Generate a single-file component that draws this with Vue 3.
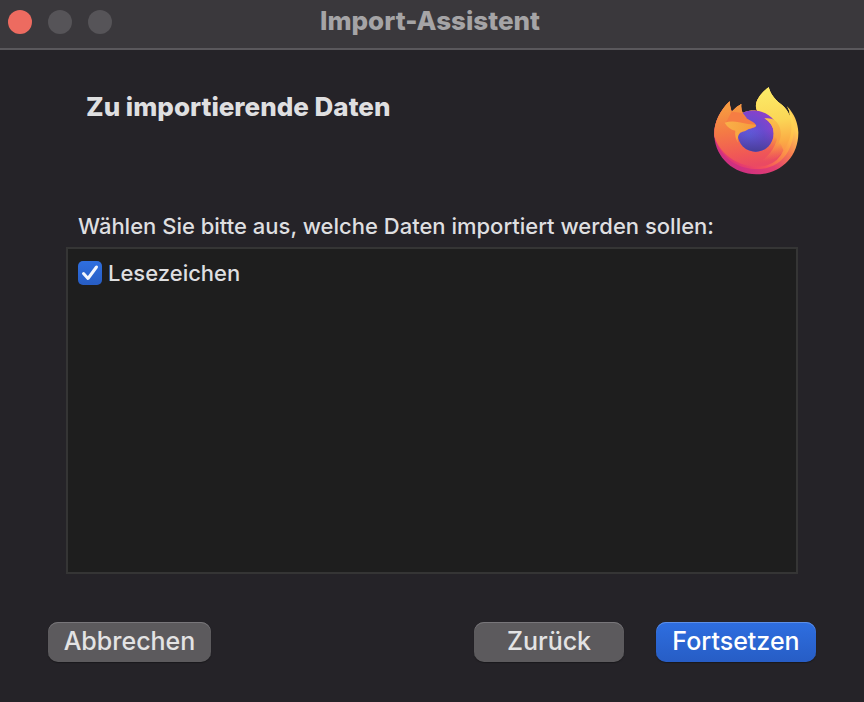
<template>
  <div class="wizard">
    <header class="titlebar">
      <div class="lights">
        <button class="light close" aria-label="Schließen" @click="closed = true"></button>
        <button class="light" aria-label="Minimieren" disabled></button>
        <button class="light" aria-label="Zoomen" disabled></button>
      </div>
      <h1 class="title">Import-Assistent</h1>
    </header>

    <div class="page-header">
      <h2 class="heading">Zu importierende Daten</h2>
      <svg class="logo" viewBox="30 32 255 264" aria-hidden="true">
        <defs>
          <linearGradient id="flame" x1="250" y1="70" x2="75" y2="280" gradientUnits="userSpaceOnUse">
            <stop offset="0" stop-color="#ffed60" />
            <stop offset="0.28" stop-color="#ffc04a" />
            <stop offset="0.5" stop-color="#fb8a48" />
            <stop offset="0.72" stop-color="#f4525a" />
            <stop offset="1" stop-color="#d92a80" />
          </linearGradient>
          <linearGradient id="rim" x1="275" y1="160" x2="120" y2="290" gradientUnits="userSpaceOnUse">
            <stop offset="0" stop-color="#ffce55" />
            <stop offset="0.3" stop-color="#f67a50" />
            <stop offset="0.6" stop-color="#e23f70" />
            <stop offset="1" stop-color="#cf3080" />
          </linearGradient>
          <linearGradient id="tail" x1="200" y1="34" x2="225" y2="250" gradientUnits="userSpaceOnUse">
            <stop offset="0" stop-color="#fcec68" />
            <stop offset="0.45" stop-color="#fbd656" />
            <stop offset="0.75" stop-color="#fbac45" />
            <stop offset="1" stop-color="#f97c48" stop-opacity="0" />
          </linearGradient>
          <linearGradient id="body" x1="95" y1="90" x2="120" y2="270" gradientUnits="userSpaceOnUse">
            <stop offset="0" stop-color="#f69a40" />
            <stop offset="0.4" stop-color="#f47a45" />
            <stop offset="0.8" stop-color="#f05856" />
            <stop offset="1" stop-color="#ea4a62" />
          </linearGradient>
          <radialGradient id="globe" cx="135" cy="180" r="88" gradientUnits="userSpaceOnUse">
            <stop offset="0" stop-color="#5f5fdf" />
            <stop offset="0.5" stop-color="#6a4bd0" />
            <stop offset="1" stop-color="#8f3fc9" />
          </radialGradient>
          <linearGradient id="globeShade" x1="150" y1="160" x2="150" y2="226" gradientUnits="userSpaceOnUse">
            <stop offset="0" stop-color="#5144b0" stop-opacity="0" />
            <stop offset="1" stop-color="#463f98" />
          </linearGradient>
          <linearGradient id="snout" x1="65" y1="135" x2="155" y2="160" gradientUnits="userSpaceOnUse">
            <stop offset="0" stop-color="#f9b048" />
            <stop offset="1" stop-color="#f69b3c" />
          </linearGradient>
          <linearGradient id="cheek" x1="205" y1="128" x2="195" y2="225" gradientUnits="userSpaceOnUse">
            <stop offset="0" stop-color="#fbc04c" />
            <stop offset="0.5" stop-color="#f9a544" />
            <stop offset="1" stop-color="#f67a48" stop-opacity="0" />
          </linearGradient>
        </defs>
        <path fill="url(#rim)" d="M31 180C28 145 45 105 77 75Q77 91 83 106Q96 91 112 83Q110 98 116 110C135 101 156 102 160 104C145 79 173 48 194 33C201 58 216 73 234 86Q250 99 257 119Q258 104 249 90C271 112 282 141 283 168C284 242 229 294 157 294C89 294 35 244 31 180Z" />
        <path fill="url(#flame)" d="M31 180C28 145 45 105 77 75Q77 91 83 106Q96 91 112 83Q110 98 116 110C135 101 156 102 160 104C145 79 173 48 194 33C201 58 216 73 234 86Q250 99 257 119Q258 104 249 90C276 126 276 180 253 224C232 263 193 281 152 278C92 276 45 236 31 180Z" />
        <path fill="url(#body)" d="M31 180C28 145 45 105 77 75Q77 91 83 106Q96 91 112 83Q110 98 116 110L156 148L208 180Q228 190 238 222Q225 255 190 267C130 284 52 248 31 180Z" />
        <path fill="url(#tail)" d="M160 104C145 79 173 48 194 33C201 58 216 73 234 86C271 119 273 184 231 233C215 250 196 256 175 252C195 238 222 205 222 166Q223 139 203 124Q184 110 160 104Z" />
        <circle cx="155" cy="172" r="54" fill="url(#globe)" />
        <path fill="url(#globe)" d="M116 110C143 96 188 102 210 132Q192 127 181 127L208 157Q190 172 154 157Z" />
        <circle cx="155" cy="172" r="54" fill="url(#globeShade)" />
        <path fill="url(#cheek)" d="M181 126Q201 124 210 130C232 146 236 176 223 202Q209 228 176 234Q164 232 158 226C187 224 209 201 209 171Q209 143 181 126Z" />
        <path fill="#f67d43" d="M83 106Q98 107 115 111C122 127 139 131 152 141Q158 147 154 152C134 162 105 159 96 145Q84 130 65 140Z" />
        <path fill="url(#snout)" d="M62 139Q83 132 105 138Q133 145 156 145Q158 150 149 153Q132 159 125 163C116 167 109 165 103 178Q98 190 103 200Q91 183 94 163Q73 158 62 139Z" />
      </svg>
    </div>

    <main class="content">
      <p id="prompt" class="prompt">Wählen Sie bitte aus, welche Daten importiert werden sollen:</p>
      <div class="data-list" role="group" aria-labelledby="prompt">
        <label v-for="item in items" :key="item.id" class="data-item">
          <span class="check">
            <input v-model="item.checked" type="checkbox" />
            <svg v-if="item.checked" viewBox="0 0 24 24" aria-hidden="true">
              <path d="M5.5 12.5L10 17.5L18.5 6" />
            </svg>
          </span>
          <span>{{ item.label }}</span>
        </label>
      </div>
    </main>

    <footer class="buttons">
      <button class="btn cancel" @click="closed = true">Abbrechen</button>
      <button class="btn back">Zurück</button>
      <button class="btn primary">Fortsetzen</button>
    </footer>
  </div>
</template>

<script setup>
import { ref } from 'vue'

const closed = ref(false)
const items = ref([
  { id: 'bookmarks', label: 'Lesezeichen', checked: true }
])
</script>

<style>
body { margin: 0; background: #252328 }
</style>

<style scoped>
.wizard { box-sizing: border-box; min-height: 100vh; display: flex; flex-direction: column; background: #252328; color: #dfdfe0; font-family: Inter, "Liberation Sans", sans-serif }

.titlebar { display: grid; grid-template-columns: 1fr auto 1fr; align-items: center; height: 48px; padding: 0 12px 0 8px; background: #3a383c; border-bottom: 2px solid #5a585c }
.lights { display: flex; gap: 16px; padding-bottom: 4px }
.light { width: 24px; height: 24px; padding: 0; border: none; border-radius: 50%; background: #565458 }
.light.close { background: #ed6b60 }
.title { margin: 0; padding-bottom: 6px; font-size: 26px; line-height: 32px; font-weight: 800; color: #a5a4a6 }

.page-header { display: flex; justify-content: space-between; align-items: flex-start; padding: 37px 65px 0 86px }
.heading { margin: 4px 0 0; font-size: 26px; line-height: 32px; font-weight: 800 }
.logo { width: 85px; height: 88px }

.content { flex: 1; display: flex; flex-direction: column; padding: 35px 66px 0 }
.prompt { margin: 0; padding: 0 12px 5px; font-size: 22px; line-height: 32px; font-weight: 500 }
.data-list { flex: 1; padding: 8px 10px; background: #1e1e1e; border: 2px solid #353535 }
.data-item { display: flex; align-items: center; gap: 6px; font-size: 22px; line-height: 32px; font-weight: 500 }
.check { display: grid }
.check input, .check svg { grid-area: 1 / 1; width: 24px; height: 24px; margin: 0 }
.check input { appearance: none; border-radius: 5px; background: #353438 }
.check input:checked { background: linear-gradient(#2f6fdf, #275dc4) }
.check svg { pointer-events: none; fill: none; stroke: #f3f6fd; stroke-width: 3; stroke-linecap: round; stroke-linejoin: round }

.buttons { display: flex; gap: 32px; padding: 48px 48px 40px }
.btn { height: 40px; padding: 0 0 2px; border: none; border-radius: 10px; background: #5c5a5d; box-shadow: inset 0 1px #78767a, 0 1px 1px #1a191c; color: #e3e3e4; font-family: inherit; font-size: 25px; line-height: 32px; font-weight: 500 }
.cancel { width: 163px; margin-right: auto }
.back { width: 150px }
.primary { width: 160px; background: linear-gradient(#2e6ee0, #275dc5); box-shadow: inset 0 1px #5c8fe8, 0 1px 1px #1a191c; color: #fff }
</style>
